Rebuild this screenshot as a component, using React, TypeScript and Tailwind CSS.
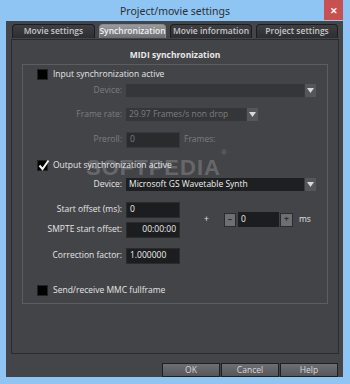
import React from "react";

const font = { fontFamily: '"Open Sans", "Noto Sans", sans-serif' };

function Arrow() {
  return (
    <div className="w-[12px] h-full bg-[#55565a] border-l border-[#3a3b3e] flex items-center justify-center">
      <svg width="7" height="5" viewBox="0 0 7 5"><path d="M0 0H7L3.5 5Z" fill="#d8d8d8" /></svg>
    </div>
  );
}

function Check({ checked }: { checked?: boolean }) {
  return (
    <div className="w-[11px] h-[11px] bg-black border border-[#222] relative">
      {checked && (
        <svg className="absolute left-[0px] top-[-2px]" width="12" height="12" viewBox="0 0 12 12">
          <path d="M1.5 6.5L4.5 10L10.5 1.5" stroke="#f2f2f2" strokeWidth="2" fill="none" />
        </svg>
      )}
    </div>
  );
}

function Label({ children, dim }: { children: React.ReactNode; dim?: boolean }) {
  return (
    <div className={`w-[99px] text-right ${dim ? "text-[#7c7d80]" : "text-[#e4e4e4]"}`}>{children}</div>
  );
}

export default function App() {
  const tabs = [
    { name: "Movie settings", w: "w-[83px]" },
    { name: "Synchronization", w: "w-[67px]", active: true },
    { name: "Movie information", w: "w-[82px]" },
    { name: "Project settings", w: "w-[82px]" },
  ];

  return (
    <div className="w-[350px] h-[384px] bg-[#8ec5f3] flex flex-col relative overflow-hidden text-[8.5px] leading-none" style={font}>
      {/* title bar */}
      <div className="h-[21px] grid grid-cols-[1fr_auto_1fr] items-center">
        <div />
        <div className="text-[10.5px] text-[#2e2e2e] pt-[2px]" style={{ fontFamily: '"Noto Sans", sans-serif' }}>Project/movie settings</div>
        <div className="flex justify-end self-start pr-[7px]">
          <div className="w-[19px] h-[20px] bg-[#c75050] text-white flex items-center justify-center text-[9px] font-bold">✕</div>
        </div>
      </div>

      {/* body */}
      <div className="flex-1 ml-[6px] mr-[7px] mb-[7px] bg-[#444549] flex flex-col">
        {/* tabs */}
        <div className="flex gap-[4px] pl-[6px] mt-[3px] h-[14px]">
          {tabs.map((t) => (
            <div
              key={t.name}
              className={`${t.w} h-[14px] rounded-t-[4px] border border-b-0 flex items-center justify-center font-semibold ${
                t.active
                  ? "bg-gradient-to-b from-[#9a9b9f] to-[#6c6d71] border-[#8a8b8f] text-[#f0f0f0]"
                  : "bg-gradient-to-b from-[#3e3f43] to-[#2d2e31] border-[#1c1d1f] text-[#c6c6c6]"
              }`}
            >
              {t.name}
            </div>
          ))}
        </div>

        {/* tab panel */}
        <div className="ml-[5px] mr-[4px] mt-[1px] h-[315px] border border-[#2a2b2e] bg-[#434448] flex flex-col">
          <div className="text-center font-bold text-[#e8e8e8] mt-[11px]">MIDI synchronization</div>

          {/* group box */}
          <div className="ml-[10px] w-[306px] h-[240px] mt-[4px] border border-[#5c5d61] flex flex-col">
            <div className="flex items-center gap-[5px] ml-[14px] mt-[4px]">
              <Check />
              <span className="text-[#e4e4e4]">Input synchronization active</span>
            </div>

            <div className="flex items-center mt-[4px] h-[13px]">
              <Label dim>Device:</Label>
              <div className="ml-[4px] w-[190px] h-[13px] bg-[#353639] flex justify-end">
                <Arrow />
              </div>
            </div>

            <div className="flex items-center mt-[11px] h-[13px]">
              <Label dim>Frame rate:</Label>
              <div className="ml-[4px] w-[132px] h-[13px] bg-[#353639] flex items-center justify-between">
                <span className="pl-[3px] text-[#7c7d80]">29.97 Frames/s non drop</span>
                <Arrow />
              </div>
            </div>

            <div className="flex items-center mt-[11px] h-[16px]">
              <Label dim>Preroll:</Label>
              <div className="ml-[4px] w-[54px] h-[16px] bg-[#2a2b2d] border border-[#38393c] flex items-center pl-[3px] text-[#7c7d80]">0</div>
              <span className="ml-[4px] text-[#7c7d80]">Frames:</span>
            </div>

            <div className="flex items-center gap-[5px] ml-[14px] mt-[12px]">
              <Check checked />
              <span className="text-[#e4e4e4]">Output synchronization active</span>
            </div>

            <div className="flex items-center mt-[7px] h-[13px]">
              <Label>Device:</Label>
              <div className="ml-[4px] w-[190px] h-[13px] bg-[#1e1f21] flex items-center justify-between">
                <span className="pl-[3px] text-[#f0f0f0]">Microsoft GS Wavetable Synth</span>
                <Arrow />
              </div>
            </div>

            <div className="flex items-center mt-[11px]">
              <div className="flex flex-col gap-[4px]">
                <div className="flex items-center h-[16px]">
                  <Label>Start offset (ms):</Label>
                  <div className="ml-[4px] w-[54px] h-[16px] bg-[#1c1d1f] border border-[#2a2b2d] flex items-center pl-[3px] text-[#f0f0f0]">0</div>
                </div>
                <div className="flex items-center h-[16px]">
                  <Label>SMPTE start offset:</Label>
                  <div className="ml-[4px] w-[54px] h-[16px] bg-[#1c1d1f] border border-[#2a2b2d] flex items-center justify-end pr-[3px] text-[#f0f0f0]">00:00:00</div>
                </div>
              </div>
              <span className="ml-[24px] text-[#e4e4e4]">+</span>
              <div className="ml-[15px] flex items-center">
                <div className="w-[12px] h-[14px] bg-[#6e6f73] border border-[#2a2b2d] flex items-center justify-center text-[#2a2b2d] font-bold">–</div>
                <div className="ml-[2px] w-[41px] h-[15px] bg-[#1c1d1f] flex items-center pl-[3px] text-[#f0f0f0]">0</div>
                <div className="ml-[1px] w-[13px] h-[14px] bg-[#6e6f73] border border-[#2a2b2d] flex items-center justify-center text-[#2a2b2d] font-bold">+</div>
                <span className="ml-[6px] text-[#e4e4e4]">ms</span>
              </div>
            </div>

            <div className="flex items-center mt-[10px] h-[16px]">
              <Label>Correction factor:</Label>
              <div className="ml-[4px] w-[54px] h-[16px] bg-[#1c1d1f] border border-[#2a2b2d] flex items-center pl-[3px] text-[#f0f0f0]">1.000000</div>
            </div>

            <div className="flex items-center gap-[5px] ml-[14px] mt-[21px]">
              <Check />
              <span className="text-[#e4e4e4]">Send/receive MMC fullframe</span>
            </div>
          </div>
        </div>

        {/* buttons */}
        <div className="flex justify-end mt-[9px] mr-[5px] gap-[1px]">
          {["OK", "Cancel", "Help"].map((b) => (
            <div
              key={b}
              className="w-[58px] h-[14px] bg-gradient-to-b from-[#6e6f73] to-[#56575b] border border-[#1e1f21] flex items-center justify-center text-[#d8d8d8]"
            >
              {b}
            </div>
          ))}
        </div>
      </div>

      {/* watermark */}
      <div className="absolute left-[86px] top-[157px] text-[22px] leading-none font-bold text-white/20 tracking-[1px]" style={{ fontFamily: '"Liberation Sans", sans-serif' }}>
        SOFTPEDIA<sup className="text-[8px] align-top">®</sup>
      </div>
    </div>
  );
}
